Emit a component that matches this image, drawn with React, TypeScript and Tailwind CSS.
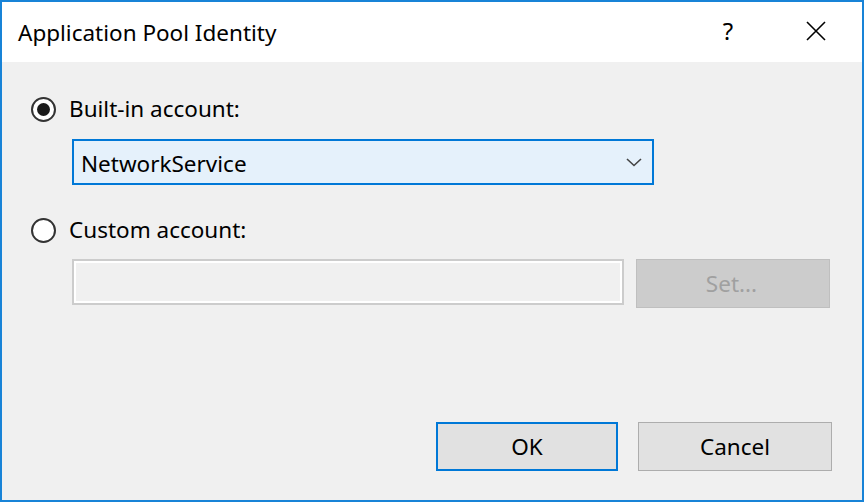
import React from 'react';

const font = { fontFamily: '"Noto Sans", "Open Sans", sans-serif' };

const Radio: React.FC<{ checked?: boolean; label: string }> = ({ checked, label }) => (
  <div className="flex items-center h-[26px]">
    <span className="w-[25px] h-[25px] rounded-full border-2 border-[#333333] bg-white flex items-center justify-center">
      {checked && <span className="w-[13px] h-[13px] rounded-full bg-[#1a1a1a]" />}
    </span>
    <span className="ml-[13px] text-[22.5px] text-black leading-none">{label}</span>
  </div>
);

export default function App() {
  return (
    <div
      className="w-[864px] h-[502px] border-2 border-[#1883d7] flex flex-col select-none"
      style={font}
    >
      {/* Title bar */}
      <div className="h-[60px] bg-white flex items-center pl-[16px] pr-[36px]">
        <span className="text-[22.5px] text-black flex-1 mt-[2px]">Application Pool Identity</span>
        <span className="text-[24px] text-black w-[20px] text-center mr-[68px] -mt-[2px]">?</span>
        <svg width="20" height="20" viewBox="0 0 20 20" className="-mt-[2px]">
          <path d="M1 1 L19 19 M19 1 L1 19" stroke="#000" strokeWidth="1.6" fill="none" />
        </svg>
      </div>

      {/* Body */}
      <div className="flex-1 bg-[#f0f0f0] flex flex-col pl-[29px] pr-[30px] pt-[34px]">
        <Radio checked label="Built-in account:" />

        <div className="ml-[41px] mt-[17px] w-[582px] h-[46px] border-2 border-[#0078d7] bg-[#e5f1fb] flex items-center pl-[7px] pr-[10px]">
          <span className="flex-1 text-[22.5px] text-black pt-[3px]">NetworkService</span>
          <svg width="16" height="10" viewBox="0 0 16 10">
            <path d="M1 2 L8 8.5 L15 2" stroke="#444" strokeWidth="1.6" fill="none" />
          </svg>
        </div>

        <div className="mt-[32px]">
          <Radio label="Custom account:" />
        </div>

        <div className="ml-[41px] mt-[16px] flex gap-[12px]">
          <div className="w-[552px] h-[46px] border-2 border-[#cccccc] bg-[#f0f0f0] shadow-[inset_0_0_0_2px_#ffffff]" />
          <div className="w-[194px] h-[49px] border border-[#bfbfbf] bg-[#cccccc] flex items-center justify-center text-[22.5px] text-[#a0a0a0] pr-[3px]">
            Set...
          </div>
        </div>

        <div className="mt-auto mb-[29px] flex justify-end gap-[20px] pr-0">
          <div className="w-[182px] h-[49px] border-2 border-[#0078d7] bg-[#e1e1e1] flex items-center justify-center text-[22.5px] text-black">
            OK
          </div>
          <div className="w-[194px] h-[49px] border border-[#adadad] bg-[#e1e1e1] flex items-center justify-center text-[22.5px] text-black">
            Cancel
          </div>
        </div>
      </div>
    </div>
  );
}
